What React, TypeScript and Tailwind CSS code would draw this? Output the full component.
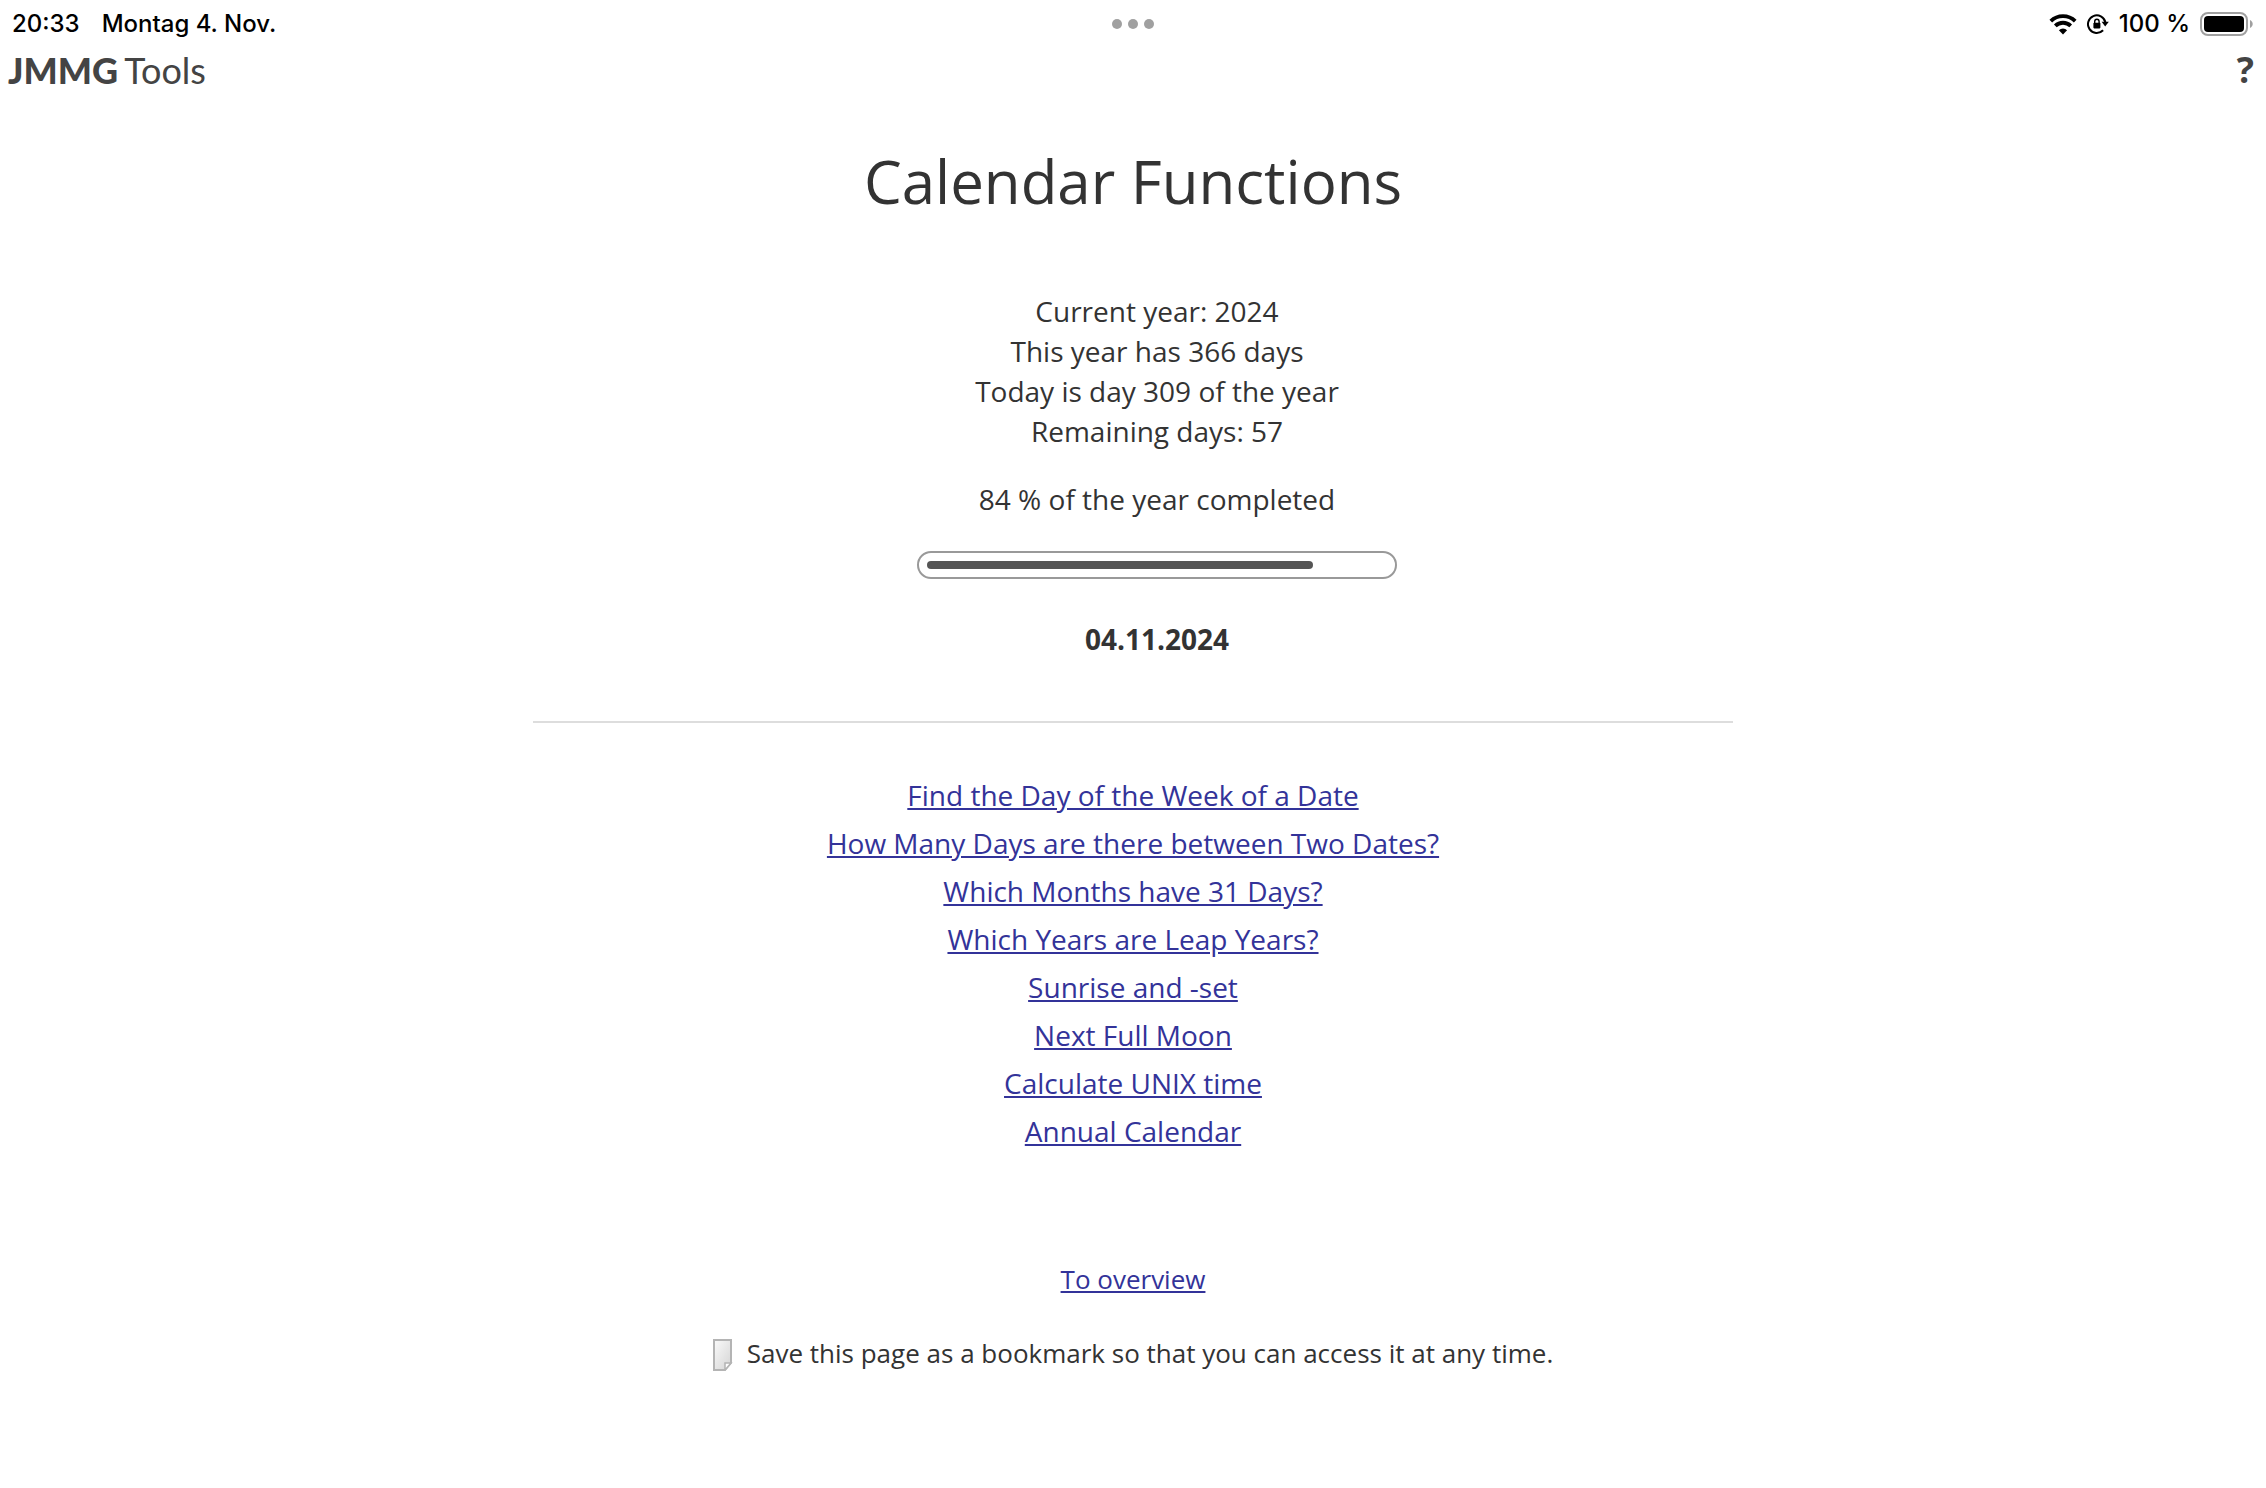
const links = [
  "Find the Day of the Week of a Date",
  "How Many Days are there between Two Dates?",
  "Which Months have 31 Days?",
  "Which Years are Leap Years?",
  "Sunrise and -set",
  "Next Full Moon",
  "Calculate UNIX time",
  "Annual Calendar",
];

const year = { current: 2024, days: 366, today: 309, remaining: 57, percent: 84 };

function StatusBar() {
  return (
    <div className="grid grid-cols-3 items-center h-12 px-3 font-['Inter',sans-serif] text-2xl font-medium text-black">
      <div className="flex gap-5.5">
        <span>20:33</span>
        <span>Montag 4. Nov.</span>
      </div>
      <div className="flex justify-center gap-1.5">
        <span className="size-2.5 rounded-full bg-[#a0a0a0]" />
        <span className="size-2.5 rounded-full bg-[#a0a0a0]" />
        <span className="size-2.5 rounded-full bg-[#a0a0a0]" />
      </div>
      <div className="flex items-center justify-end gap-2.5">
        <svg width="28" height="22" viewBox="0 0 28 22" fill="none" stroke="#000" strokeWidth="3.8" aria-hidden="true">
          <path d="M1.8 8.2a17.4 17.4 0 0 1 24.4 0" />
          <path d="M6.3 12.9a11 11 0 0 1 15.4 0" />
          <path d="M14 21.4l-4.1-4.2a5.8 5.8 0 0 1 8.2 0z" fill="#000" stroke="none" />
        </svg>
        <svg width="22" height="22" viewBox="0 0 22 22" fill="none" stroke="#000" strokeWidth="2" aria-hidden="true">
          <path d="M18.4 9.4a8.8 8.8 0 1 0-2.3 7.9" />
          <path d="M14.6 8.8h7.2l-3.6 4.6z" fill="#000" stroke="none" />
          <rect x="6.4" y="9.8" width="7" height="5.6" rx="0.8" fill="#000" stroke="none" />
          <path d="M7.7 10V8.4a2.2 2.2 0 0 1 4.4 0V10" strokeWidth="1.4" />
        </svg>
        <span>100 %</span>
        <svg width="54" height="24" viewBox="0 0 54 24" aria-hidden="true">
          <rect x="1" y="1" width="46" height="22" rx="7" fill="none" stroke="#a0a0a0" strokeWidth="2" />
          <rect x="4" y="4" width="40" height="16" rx="4" fill="#000" />
          <path d="M50 8c3.6 1.6 3.6 6.4 0 8z" fill="#a0a0a0" />
        </svg>
      </div>
    </div>
  );
}

export default function App() {
  return (
    <div className="min-h-screen bg-white font-['Open_Sans',sans-serif] text-[28px] leading-10 text-[#333]">
      <StatusBar />
      <header className="flex items-center justify-between h-11 pl-2 pr-3">
        <a href="#" className="flex items-center gap-1.5 font-['Lato',sans-serif] text-4xl text-[#444]">
          <span className="font-black">JMMG</span>
          <span>Tools</span>
        </a>
        <a href="#" aria-label="Help" className="text-4xl font-bold text-[#444]">
          ?
        </a>
      </header>

      <main className="flex flex-col items-center text-center">
        <h1 className="mt-12 text-[60px] leading-[82px]">Calendar Functions</h1>

        <div className="mt-[69px] pl-12 flex flex-col items-center">
          <p>Current year: {year.current}</p>
          <p>This year has {year.days} days</p>
          <p>Today is day {year.today} of the year</p>
          <p>Remaining days: {year.remaining}</p>
          <p className="mt-7">{year.percent} % of the year completed</p>
          <div
            role="progressbar"
            aria-label="Year completed"
            aria-valuenow={year.percent}
            className="mt-8 w-120 rounded-full border-2 border-[#999] p-2"
          >
            <div className="h-2 rounded-full bg-[#555]" style={{ width: `${year.percent}%` }} />
          </div>
          <p className="mt-10 font-bold">04.11.2024</p>
        </div>

        <hr className="mt-15.5 w-full max-w-300 border-t-2 border-[#ddd]" />

        <nav className="mt-12 flex flex-col items-center leading-12">
          {links.map((label) => (
            <a key={label} href="#" className="text-[#339] underline">
              {label}
            </a>
          ))}
        </nav>

        <a href="#" className="mt-25 text-[26px] leading-12 text-[#339] underline">
          To overview
        </a>

        <p className="mt-7 flex items-center gap-3.5 text-[26px] leading-11">
          <svg width="20" height="32" viewBox="0 0 20 32" className="mt-1" aria-hidden="true">
            <defs>
              <linearGradient id="sheet" x1="0" y1="0" x2="1" y2="1">
                <stop offset="0" stopColor="#fafafa" />
                <stop offset="1" stopColor="#d4d4d4" />
              </linearGradient>
            </defs>
            <path d="M1 1h17v23l-6 7H1z" fill="url(#sheet)" stroke="#b4b4b4" strokeWidth="2" />
            <path d="M12 31v-7h6z" fill="#fff" stroke="#b4b4b4" strokeWidth="1.5" />
          </svg>
          Save this page as a bookmark so that you can access it at any time.
        </p>
      </main>
    </div>
  );
}
